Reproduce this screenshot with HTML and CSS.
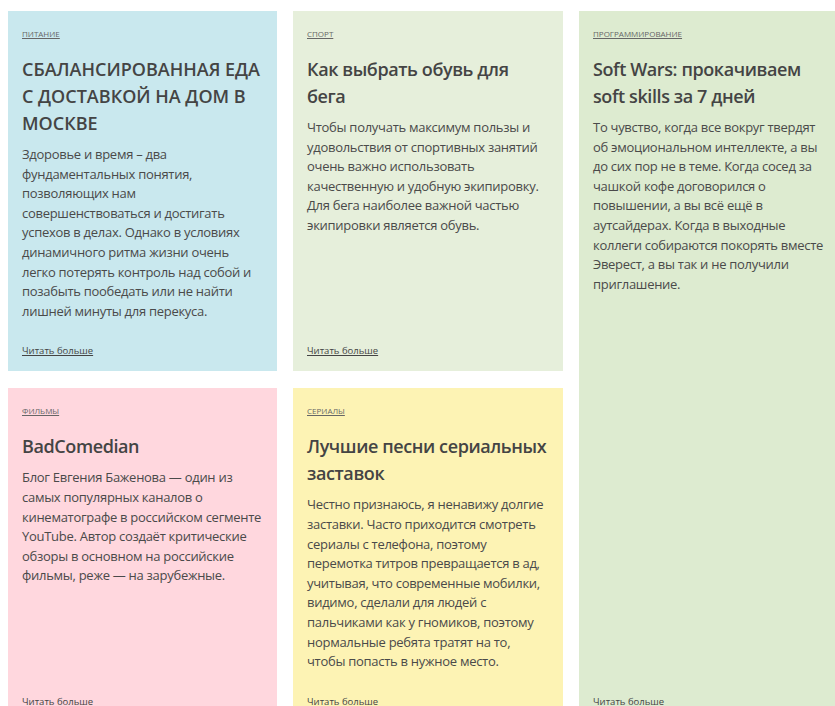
FILE: index.html
```html
<!DOCTYPE html>
<html lang="ru">
<head>
<meta charset="utf-8">
<title>Статьи</title>
<link rel="stylesheet" href="styles.css">
</head>
<body>
<main class="posts">
  <article class="post post--blue">
    <a class="post__tag" href="#">Питание</a>
    <h2 class="post__title post__title--caps">СБАЛАНСИРОВАННАЯ ЕДА С ДОСТАВКОЙ НА ДОМ В МОСКВЕ</h2>
    <p class="post__text">Здоровье и время – два фундаментальных понятия, позволяющих нам совершенствоваться и достигать успехов в делах. Однако в условиях динамичного ритма жизни очень легко потерять контроль над собой и позабыть пообедать или не найти лишней минуты для перекуса.</p>
    <a class="post__more" href="#">Читать больше</a>
  </article>
  <article class="post post--sage">
    <a class="post__tag" href="#">Спорт</a>
    <h2 class="post__title">Как выбрать обувь для бега</h2>
    <p class="post__text">Чтобы получать максимум пользы и удовольствия от спортивных занятий очень важно использовать качественную и удобную экипировку. Для бега наиболее важной частью экипировки является обувь.</p>
    <a class="post__more" href="#">Читать больше</a>
  </article>
  <article class="post post--green post--tall">
    <a class="post__tag" href="#">Программирование</a>
    <h2 class="post__title">Soft Wars: прокачиваем soft skills за 7 дней</h2>
    <p class="post__text">То чувство, когда все вокруг твердят об эмоциональном интеллекте, а вы до сих пор не в теме. Когда сосед за чашкой кофе договорился о повышении, а вы всё ещё в аутсайдерах. Когда в выходные коллеги собираются покорять вместе Эверест, а вы так и не получили приглашение.</p>
    <a class="post__more" href="#">Читать больше</a>
  </article>
  <article class="post post--pink">
    <a class="post__tag" href="#">Фильмы</a>
    <h2 class="post__title">BadComedian</h2>
    <p class="post__text">Блог Евгения Баженова — один из самых популярных каналов о кинематографе в российском сегменте YouTube. Автор создаёт критические обзоры в основном на российские фильмы, реже — на зарубежные.</p>
    <a class="post__more" href="#">Читать больше</a>
  </article>
  <article class="post post--yellow">
    <a class="post__tag" href="#">Сериалы</a>
    <h2 class="post__title">Лучшие песни сериальных заставок</h2>
    <p class="post__text">Честно признаюсь, я ненавижу долгие заставки. Часто приходится смотреть сериалы с телефона, поэтому перемотка титров превращается в ад, учитывая, что современные мобилки, видимо, сделали для людей с пальчиками как у гномиков, поэтому нормальные ребята тратят на то, чтобы попасть в нужное место.</p>
    <a class="post__more" href="#">Читать больше</a>
  </article>
</main>
</body>
</html>
```
FILE: styles.css
```css
html {
  overflow: hidden;
}

body {
  margin: 11px 0 0 8px;
  background: #fff;
  font-family: "Open Sans", "Noto Sans", sans-serif;
  color: #4a4a4a;
}

.posts {
  display: grid;
  grid-template-columns: 269px 270px 261px;
  column-gap: 16px;
  row-gap: 17px;
  width: 832px;
}

.post {
  display: flex;
  flex-direction: column;
  align-items: flex-start;
  padding: 14px;
}

.post--blue { background: #c9e8ee; }
.post--sage { background: #e6efdb; }
.post--green { background: #ddebd0; }
.post--pink { background: #ffd7de; }
.post--yellow { background: #fdf3b4; }

.post--tall {
  grid-column: 3;
  grid-row: 1 / span 2;
}

.post__tag {
  margin-top: 3px;
  font-size: 8px;
  line-height: 12px;
  text-transform: uppercase;
  color: #666;
  text-decoration: underline;
}

.post__title {
  margin: 16px 0 0;
  font-size: 18px;
  line-height: 27px;
  font-weight: 600;
  letter-spacing: -0.4px;
  color: #444;
}

.post__title--caps {
  letter-spacing: 0;
}

.post__text {
  margin: 8px 0 0;
  font-size: 13px;
  line-height: 19.6px;
  letter-spacing: -0.28px;
}

.post__more {
  margin-top: auto;
  padding-top: 24px;
  font-size: 9.5px;
  line-height: 12px;
  color: #444;
  text-decoration: underline;
}
```
